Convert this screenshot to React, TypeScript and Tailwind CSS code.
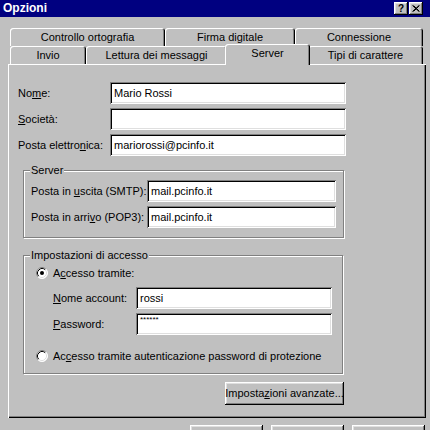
import React from 'react';

const raised =
  'shadow-[inset_-1px_-1px_0_#000,inset_1px_1px_0_#fff,inset_-2px_-2px_0_#808080,inset_2px_2px_0_#dfdfdf]';
const sunken =
  'shadow-[inset_1px_1px_0_#808080,inset_-1px_-1px_0_#fff,inset_2px_2px_0_#000,inset_-2px_-2px_0_#dfdfdf]';
const etched = 'border border-[#808080] shadow-[inset_1px_1px_0_#fff,1px_1px_0_#fff]';

type TabProps = { label: string; width: string; selected?: boolean };

const Tab: React.FC<TabProps> = ({ label, width, selected }) => (
  <div
    className={`${width} flex shrink-0 items-center justify-center rounded-t-[3px] bg-[#c0c0c0] shadow-[inset_1px_1px_0_#fff,inset_-1px_0_0_#000,inset_-2px_0_0_#808080] ${
      selected ? 'relative z-10 -mx-[2px] -mt-[2px] h-[21px] pb-[2px]' : 'h-[18px]'
    }`}
  >
    {label}
  </div>
);

const Field: React.FC<{ value?: string; width: string; password?: boolean }> = ({ value, width, password }) => (
  <div
    className={`${width} flex h-[22px] shrink-0 bg-white px-[4px] ${sunken} ${
      password ? 'items-start pt-[3px] text-[8px] leading-none' : 'items-center'
    }`}
  >
    {value}
  </div>
);

const Radio: React.FC<{ checked?: boolean }> = ({ checked }) => (
  <svg width="12" height="12" viewBox="0 0 12 12" className="shrink-0">
    <circle cx="6" cy="6" r="5.5" fill="#fff" />
    <path d="M2.11 9.89 A5.5 5.5 0 0 1 9.89 2.11" fill="none" stroke="#808080" strokeWidth="1" />
    <path d="M9.89 2.11 A5.5 5.5 0 0 1 2.11 9.89" fill="none" stroke="#fff" strokeWidth="1" />
    <path d="M2.82 9.18 A4.5 4.5 0 0 1 9.18 2.82" fill="none" stroke="#000" strokeWidth="1" />
    <path d="M9.18 2.82 A4.5 4.5 0 0 1 2.82 9.18" fill="none" stroke="#dfdfdf" strokeWidth="1" />
    {checked && <circle cx="6" cy="6" r="2" fill="#000" />}
  </svg>
);

export default function App() {
  return (
    <div className="h-[430px] w-[430px] overflow-hidden bg-[#c0c0c0] font-['Liberation_Sans',Arial,sans-serif] text-[11px] leading-[13px] text-black">
      {/* title bar */}
      <div className="flex h-[17px] items-center justify-between bg-[#000080] pl-[3px] pr-[7px]">
        <span className="text-[12px] font-bold text-white">Opzioni</span>
        <div className="flex gap-[1px]">
          <div className={`flex h-[13px] w-[14px] items-center justify-center bg-[#c0c0c0] text-[10px] font-bold leading-none ${raised}`}>
            ?
          </div>
          <div className={`flex h-[13px] w-[14px] items-center justify-center bg-[#c0c0c0] ${raised}`}>
            <svg width="8" height="7" viewBox="0 0 8 7">
              <path d="M0.5 0.5 L7 6.5 M1.5 0.5 L7.5 6.5 M7 0.5 L0.5 6.5 M7.5 0.5 L1.5 6.5" stroke="#000" strokeWidth="1" />
            </svg>
          </div>
        </div>
      </div>

      {/* tabs */}
      <div className="mt-[11px] ml-[10px] flex">
        <Tab label="Controllo ortografia" width="w-[155px]" />
        <Tab label="Firma digitale" width="w-[130px]" />
        <Tab label="Connessione" width="w-[128px]" />
      </div>
      <div className="ml-[10px] flex h-[18px] items-start">
        <Tab label="Invio" width="w-[76px]" />
        <Tab label="Lettura dei messaggi" width="w-[141px]" />
        <Tab label="Server" width="w-[85px]" selected />
        <Tab label="Tipi di carattere" width="w-[115px]" />
      </div>

      {/* page */}
      <div className="ml-[8px] h-[354px] w-[418px] bg-[#c0c0c0] pt-[18px] pl-[10px] shadow-[inset_1px_1px_0_#fff,inset_-1px_-1px_0_#000,inset_-2px_-2px_0_#808080]">
        <div className="flex flex-col gap-[4px]">
          <div className="flex items-center">
            <span className="w-[92px]">
              No<u>m</u>e:
            </span>
            <Field value="Mario Rossi" width="w-[236px]" />
          </div>
          <div className="flex items-center">
            <span className="w-[92px]">
              <u>S</u>ocietà:
            </span>
            <Field width="w-[236px]" />
          </div>
          <div className="flex items-center">
            <span className="w-[92px]">
              Posta elettro<u>n</u>ica:
            </span>
            <Field value="mariorossi@pcinfo.it" width="w-[236px]" />
          </div>
        </div>

        <fieldset className={`mt-[8px] ml-[5px] w-[320px] px-[7px] pt-[3px] pb-[9px] ${etched}`}>
          <legend className="ml-[-1px] bg-[#c0c0c0] px-[1px]">Server</legend>
          <div className="flex flex-col gap-[4px]">
            <div className="flex items-center">
              <span className="w-[116px]">
                Posta in <u>u</u>scita (SMTP):
              </span>
              <Field value="mail.pcinfo.it" width="w-[189px]" />
            </div>
            <div className="flex items-center">
              <span className="w-[116px]">
                Posta in arri<u>v</u>o (POP3):
              </span>
              <Field value="mail.pcinfo.it" width="w-[189px]" />
            </div>
          </div>
        </fieldset>

        <fieldset className={`mt-[11px] ml-[5px] w-[320px] px-[7px] pt-[3px] pb-[9px] ${etched}`}>
          <legend className="ml-[-1px] bg-[#c0c0c0] px-[1px]">Impostazioni di accesso</legend>
          <div className="ml-[5px] flex h-[16px] items-center gap-[5px]">
            <Radio checked />
            <span>
              A<u>c</u>cesso tramite:
            </span>
          </div>
          <div className="mt-[6px] ml-[22px] flex flex-col gap-[4px]">
            <div className="flex items-center">
              <span className="w-[83px]">
                <u>N</u>ome account:
              </span>
              <Field value="rossi" width="w-[196px]" />
            </div>
            <div className="flex items-center">
              <span className="w-[83px]">
                <u>P</u>assword:
              </span>
              <Field value="******" width="w-[196px]" password />
            </div>
          </div>
          <div className="mt-[13px] ml-[5px] flex h-[16px] items-center gap-[5px]">
            <Radio />
            <span>
              Ac<u>c</u>esso tramite autenticazione password di protezione
            </span>
          </div>
        </fieldset>

        <div className="mt-[8px] flex w-[326px] justify-end">
          <div className={`flex h-[23px] w-[119px] items-center justify-center bg-[#c0c0c0] ${raised}`}>
            Imposta<u>z</u>ioni avanzate...
          </div>
        </div>
      </div>

      {/* dialog buttons, cut off */}
      <div className="mt-[7px] ml-[190px] flex gap-[8px]">
        <div className={`h-[23px] w-[73px] bg-[#c0c0c0] ${raised}`} />
        <div className={`h-[23px] w-[73px] bg-[#c0c0c0] ${raised}`} />
        <div className={`h-[23px] w-[73px] bg-[#c0c0c0] ${raised}`} />
      </div>
    </div>
  );
}
